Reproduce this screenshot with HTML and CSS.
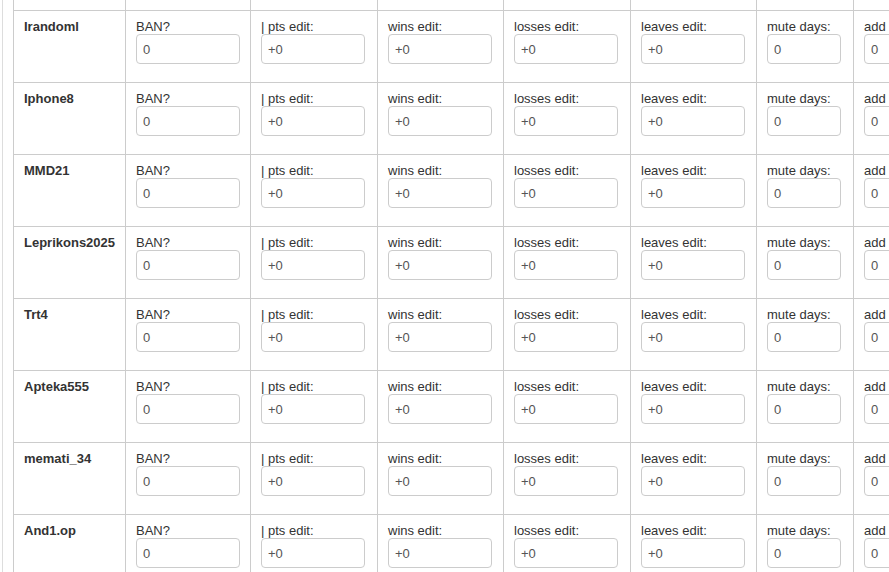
FILE: index.html
```html
<!DOCTYPE html>
<html lang="en">
<head>
    <meta charset="UTF-8">
    <meta name="viewport" content="width=device-width, initial-scale=1.0">
    <title>Players edit</title>
    <link rel="stylesheet" href="styles.css">
</head>
<body>

<div class="panel">
    <table class="players">
        <tr class="cut">
            <td class="name"></td><td class="c-ban"></td><td class="c-pts"></td><td class="c-wins"></td>
            <td class="c-losses"></td><td class="c-leaves"></td><td class="c-mute"></td><td class="c-add"></td>
        </tr>
        <tr>
            <td class="name">Irandoml</td>
            <td><label>BAN?</label><input type="text" value="0"></td>
            <td><label>| pts edit:</label><input type="text" value="+0"></td>
            <td><label>wins edit:</label><input type="text" value="+0"></td>
            <td><label>losses edit:</label><input type="text" value="+0"></td>
            <td><label>leaves edit:</label><input type="text" value="+0"></td>
            <td><label>mute days:</label><input class="short" type="text" value="0"></td>
            <td><label>add</label><input type="text" value="0"></td>
        </tr>
        <tr>
            <td class="name">Iphone8</td>
            <td><label>BAN?</label><input type="text" value="0"></td>
            <td><label>| pts edit:</label><input type="text" value="+0"></td>
            <td><label>wins edit:</label><input type="text" value="+0"></td>
            <td><label>losses edit:</label><input type="text" value="+0"></td>
            <td><label>leaves edit:</label><input type="text" value="+0"></td>
            <td><label>mute days:</label><input class="short" type="text" value="0"></td>
            <td><label>add</label><input type="text" value="0"></td>
        </tr>
        <tr>
            <td class="name">MMD21</td>
            <td><label>BAN?</label><input type="text" value="0"></td>
            <td><label>| pts edit:</label><input type="text" value="+0"></td>
            <td><label>wins edit:</label><input type="text" value="+0"></td>
            <td><label>losses edit:</label><input type="text" value="+0"></td>
            <td><label>leaves edit:</label><input type="text" value="+0"></td>
            <td><label>mute days:</label><input class="short" type="text" value="0"></td>
            <td><label>add</label><input type="text" value="0"></td>
        </tr>
        <tr>
            <td class="name">Leprikons2025</td>
            <td><label>BAN?</label><input type="text" value="0"></td>
            <td><label>| pts edit:</label><input type="text" value="+0"></td>
            <td><label>wins edit:</label><input type="text" value="+0"></td>
            <td><label>losses edit:</label><input type="text" value="+0"></td>
            <td><label>leaves edit:</label><input type="text" value="+0"></td>
            <td><label>mute days:</label><input class="short" type="text" value="0"></td>
            <td><label>add</label><input type="text" value="0"></td>
        </tr>
        <tr>
            <td class="name">Trt4</td>
            <td><label>BAN?</label><input type="text" value="0"></td>
            <td><label>| pts edit:</label><input type="text" value="+0"></td>
            <td><label>wins edit:</label><input type="text" value="+0"></td>
            <td><label>losses edit:</label><input type="text" value="+0"></td>
            <td><label>leaves edit:</label><input type="text" value="+0"></td>
            <td><label>mute days:</label><input class="short" type="text" value="0"></td>
            <td><label>add</label><input type="text" value="0"></td>
        </tr>
        <tr>
            <td class="name">Apteka555</td>
            <td><label>BAN?</label><input type="text" value="0"></td>
            <td><label>| pts edit:</label><input type="text" value="+0"></td>
            <td><label>wins edit:</label><input type="text" value="+0"></td>
            <td><label>losses edit:</label><input type="text" value="+0"></td>
            <td><label>leaves edit:</label><input type="text" value="+0"></td>
            <td><label>mute days:</label><input class="short" type="text" value="0"></td>
            <td><label>add</label><input type="text" value="0"></td>
        </tr>
        <tr>
            <td class="name">memati_34</td>
            <td><label>BAN?</label><input type="text" value="0"></td>
            <td><label>| pts edit:</label><input type="text" value="+0"></td>
            <td><label>wins edit:</label><input type="text" value="+0"></td>
            <td><label>losses edit:</label><input type="text" value="+0"></td>
            <td><label>leaves edit:</label><input type="text" value="+0"></td>
            <td><label>mute days:</label><input class="short" type="text" value="0"></td>
            <td><label>add</label><input type="text" value="0"></td>
        </tr>
        <tr>
            <td class="name">And1.op</td>
            <td><label>BAN?</label><input type="text" value="0"></td>
            <td><label>| pts edit:</label><input type="text" value="+0"></td>
            <td><label>wins edit:</label><input type="text" value="+0"></td>
            <td><label>losses edit:</label><input type="text" value="+0"></td>
            <td><label>leaves edit:</label><input type="text" value="+0"></td>
            <td><label>mute days:</label><input class="short" type="text" value="0"></td>
            <td><label>add</label><input type="text" value="0"></td>
        </tr>
    </table>
</div>

</body>
</html>
```

FILE: styles.css
```css
html, body {
    margin: 0;
    background-color: #fff;
}

body {
    font-family: "Liberation Sans", Arial, sans-serif;
    font-size: 13px;
    color: #333;
}

.panel {
    height: 100vh;
    overflow: hidden;
    margin-left: 2px;
    padding-left: 10px;
    border-left: 1px solid #ddd;
}

.players {
    width: 966px;
    border-collapse: collapse;
    table-layout: fixed;
}

.players td {
    border: 1px solid #ccc;
    padding: 8px 10px 18px;
    vertical-align: top;
    line-height: 15px;
}

.players tr.cut td {
    border-top: none;
    padding: 0 10px;
    height: 10px;
}

.players .name {
    width: 91px;
    font-weight: bold;
}

/* column widths, the first row sets them */
.c-ban { width: 104px; }
.c-pts { width: 106px; }
.c-wins { width: 105px; }
.c-losses { width: 106px; }
.c-leaves { width: 105px; }
.c-mute { width: 76px; }
.c-add { width: 104px; }

.players label {
    display: block;
    white-space: nowrap;
}

.players input {
    display: block;
    box-sizing: border-box;
    width: 104px;
    height: 30px;
    margin: 0;
    padding: 0 6px;
    border: 1px solid #ccc;
    border-radius: 4px;
    font-family: "Liberation Sans", Arial, sans-serif;
    font-size: 13px;
    color: #555;
    background-color: #fff;
}

.players input.short {
    width: 74px;
}
```
